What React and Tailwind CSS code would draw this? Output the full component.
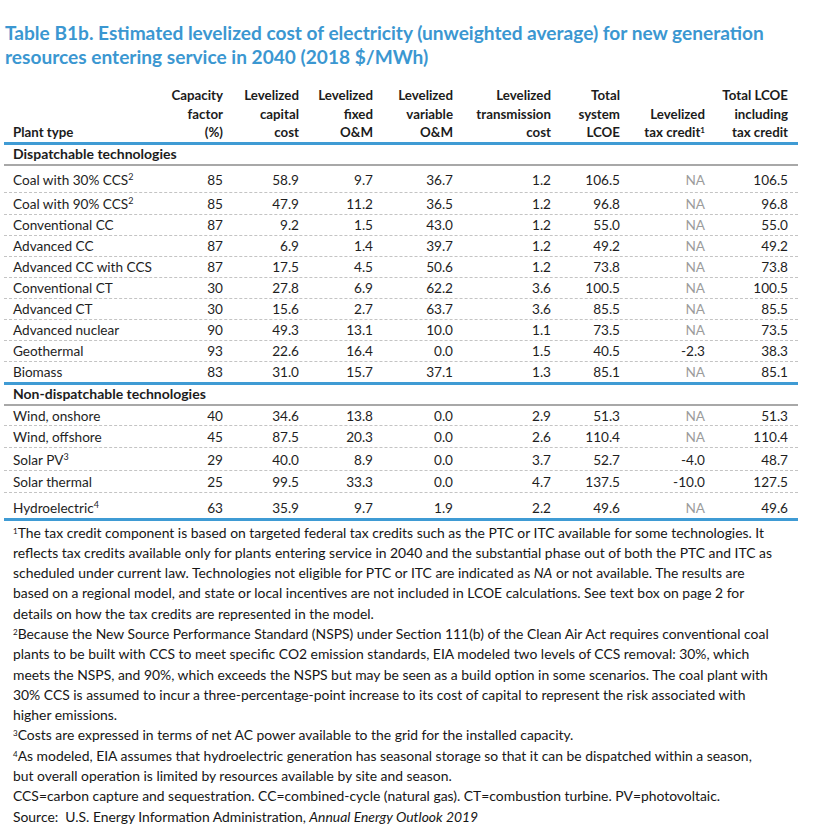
import React from 'react';

const cols = 'grid grid-cols-[156px_63px_76px_74px_80px_98px_69px_85px_83px]';

const dispatchable = [
  { name: 'Coal with 30% CCS', sup: '2', h: 'h-[27px]', pb: 'pb-[2px]', v: ['85', '58.9', '9.7', '36.7', '1.2', '106.5', 'NA', '106.5'] },
  { name: 'Coal with 90% CCS', sup: '2', h: 'h-[22px]', v: ['85', '47.9', '11.2', '36.5', '1.2', '96.8', 'NA', '96.8'] },
  { name: 'Conventional CC', h: 'h-[21px]', v: ['87', '9.2', '1.5', '43.0', '1.2', '55.0', 'NA', '55.0'] },
  { name: 'Advanced CC', h: 'h-[21px]', v: ['87', '6.9', '1.4', '39.7', '1.2', '49.2', 'NA', '49.2'] },
  { name: 'Advanced CC with CCS', h: 'h-[21px]', v: ['87', '17.5', '4.5', '50.6', '1.2', '73.8', 'NA', '73.8'] },
  { name: 'Conventional CT', h: 'h-[21px]', v: ['30', '27.8', '6.9', '62.2', '3.6', '100.5', 'NA', '100.5'] },
  { name: 'Advanced CT', h: 'h-[21px]', v: ['30', '15.6', '2.7', '63.7', '3.6', '85.5', 'NA', '85.5'] },
  { name: 'Advanced nuclear', h: 'h-[21px]', v: ['90', '49.3', '13.1', '10.0', '1.1', '73.5', 'NA', '73.5'] },
  { name: 'Geothermal', h: 'h-[21px]', v: ['93', '22.6', '16.4', '0.0', '1.5', '40.5', '-2.3', '38.3'] },
  { name: 'Biomass', h: 'h-[20px]', last: true, v: ['83', '31.0', '15.7', '37.1', '1.3', '85.1', 'NA', '85.1'] },
];

const nonDispatchable = [
  { name: 'Wind, onshore', h: 'h-[20px]', v: ['40', '34.6', '13.8', '0.0', '2.9', '51.3', 'NA', '51.3'] },
  { name: 'Wind, offshore', h: 'h-[22px]', v: ['45', '87.5', '20.3', '0.0', '2.6', '110.4', 'NA', '110.4'] },
  { name: 'Solar PV', sup: '3', h: 'h-[23px]', v: ['29', '40.0', '8.9', '0.0', '3.7', '52.7', '-4.0', '48.7'] },
  { name: 'Solar thermal', h: 'h-[22px]', v: ['25', '99.5', '33.3', '0.0', '4.7', '137.5', '-10.0', '127.5'] },
  { name: 'Hydroelectric', sup: '4', h: 'h-[25px]', last: true, v: ['63', '35.9', '9.7', '1.9', '2.2', '49.6', 'NA', '49.6'] },
];

const Row = ({ r }) => (
  <div
    className={`${cols} items-end ${r.h} ${r.pb || ''} ${
      r.last ? '' : 'border-b border-dashed border-[#c4c4c4]'
    } text-[13.6px] leading-[20px] text-[#1e1e1e]`}
  >
    <div className="pl-[9px] whitespace-nowrap">
      {r.name}
      {r.sup && <sup className="text-[9px]">{r.sup}</sup>}
    </div>
    {r.v.map((x, i) => (
      <div key={i} className={`text-right ${x === 'NA' ? 'text-[#9c9c9c]' : ''}`}>
        {x}
      </div>
    ))}
  </div>
);

const Section = ({ title, rows }) => (
  <>
    <div className="h-[21px] flex items-end pl-[9px] font-bold text-[14px] leading-[20px] text-[#1c1c1c] border-b-2 border-[#a8a8a8]">
      {title}
    </div>
    {rows.map((r) => (
      <Row key={r.name} r={r} />
    ))}
    <div className="h-[3px] bg-[#3f9bd4]" />
  </>
);

const H = ({ children }) => <div className="text-right">{children}</div>;

export default function App() {
  return (
    <div className="w-[824px] h-[831px] bg-white font-['Lato',sans-serif] overflow-hidden">
      {/* title */}
      <div className="pt-[21px] pl-[5px] font-bold text-[19.1px] leading-[24px] text-[#3b97d1] whitespace-nowrap">
        <div>Table B1b. Estimated levelized cost of electricity (unweighted average) for new generation</div>
        <div>resources entering service in 2040 (2018 $/MWh)</div>
      </div>

      <div className="ml-[4px] w-[794px] mt-[17px]">
        {/* header */}
        <div className={`${cols} items-end font-bold text-[13.3px] leading-[18.5px] text-[#1c1c1c]`}>
          <div className="pl-[9px]">Plant type</div>
          <H>Capacity<br />factor<br />(%)</H>
          <H>Levelized<br />capital<br />cost</H>
          <H>Levelized<br />fixed<br />O&amp;M</H>
          <H>Levelized<br />variable<br />O&amp;M</H>
          <H>Levelized<br />transmission<br />cost</H>
          <H>Total<br />system<br />LCOE</H>
          <H>
            Levelized
            <br />
            tax credit<sup className="text-[8px]">1</sup>
          </H>
          <H>Total LCOE<br />including<br />tax credit</H>
        </div>
        <div className="h-[3px] bg-[#3f9bd4]" />

        <Section title="Dispatchable technologies" rows={dispatchable} />
        <Section title="Non-dispatchable technologies" rows={nonDispatchable} />
      </div>

      {/* footnotes */}
      <div className="pt-[2px] pl-[13px] text-[13.9px] leading-[20.3px] text-[#161616] whitespace-nowrap">
        <div><sup className="text-[8px]">1</sup>The tax credit component is based on targeted federal tax credits such as the PTC or ITC available for some technologies. It</div>
        <div>reflects tax credits available only for plants entering service in 2040 and the substantial phase out of both the PTC and ITC as</div>
        <div>scheduled under current law. Technologies not eligible for PTC or ITC are indicated as <i>NA</i> or not available. The results are</div>
        <div>based on a regional model, and state or local incentives are not included in LCOE calculations. See text box on page 2 for</div>
        <div>details on how the tax credits are represented in the model.</div>
        <div><sup className="text-[8px]">2</sup>Because the New Source Performance Standard (NSPS) under Section 111(b) of the Clean Air Act requires conventional coal</div>
        <div>plants to be built with CCS to meet specific CO2 emission standards, EIA modeled two levels of CCS removal: 30%, which</div>
        <div>meets the NSPS, and 90%, which exceeds the NSPS but may be seen as a build option in some scenarios. The coal plant with</div>
        <div>30% CCS is assumed to incur a three-percentage-point increase to its cost of capital to represent the risk associated with</div>
        <div>higher emissions.</div>
        <div><sup className="text-[8px]">3</sup>Costs are expressed in terms of net AC power available to the grid for the installed capacity.</div>
        <div><sup className="text-[8px]">4</sup>As modeled, EIA assumes that hydroelectric generation has seasonal storage so that it can be dispatched within a season,</div>
        <div>but overall operation is limited by resources available by site and season.</div>
        <div>CCS=carbon capture and sequestration. CC=combined-cycle (natural gas). CT=combustion turbine. PV=photovoltaic.</div>
        <div className="whitespace-pre">Source:  U.S. Energy Information Administration, <i>Annual Energy Outlook 2019</i></div>
      </div>
    </div>
  );
}
